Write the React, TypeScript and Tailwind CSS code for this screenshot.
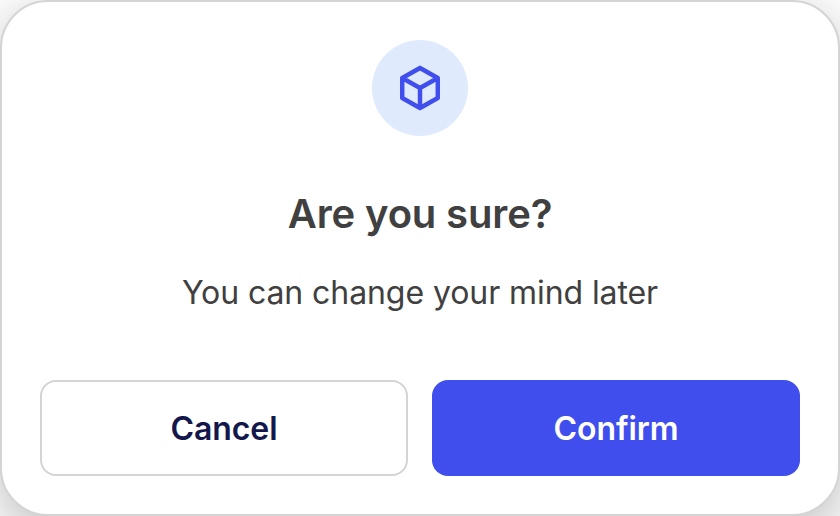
export default function App() {
  return (
    <main className="h-[516px] w-[840px] overflow-hidden bg-white font-['Inter',sans-serif]">
      <section className="flex h-full w-full flex-col items-center rounded-[48px] border-2 border-[#d4d4d4] bg-white px-[38px] pt-[38px] text-[#404040] shadow-[0_16px_56px_rgba(0,0,0,0.28)]">
        <div className="flex size-24 shrink-0 items-center justify-center rounded-full bg-[#dfeafd]">
          <svg className="size-[54px]" viewBox="-0.15 -0.15 24.3 24.3" fill="none" stroke="#404eed" strokeWidth="2" strokeLinecap="round" strokeLinejoin="round">
            <path d="M12 3l8 4.5v9L12 21l-8-4.5v-9L12 3M12 12l8-4.5M12 12v9M12 12L4 7.5" />
          </svg>
        </div>
        <h1 className="mt-12 text-[40px] leading-[60px] font-semibold tracking-[-0.15px]">Are you sure?</h1>
        <p className="mt-[25px] text-[32px] leading-[48px] tracking-[-0.08px]">You can change your mind later</p>
        <div className="mt-[63px] grid w-full grid-cols-2 gap-6">
          <button className="h-24 rounded-2xl border-2 border-[#d4d4d4] pt-0.5 text-[32px] font-semibold tracking-[-0.1px] text-[#14174b]">Cancel</button>
          <button className="h-24 rounded-2xl bg-[#404eed] pt-0.5 text-[32px] font-semibold tracking-[-0.1px] text-white">Confirm</button>
        </div>
      </section>
    </main>
  );
}
